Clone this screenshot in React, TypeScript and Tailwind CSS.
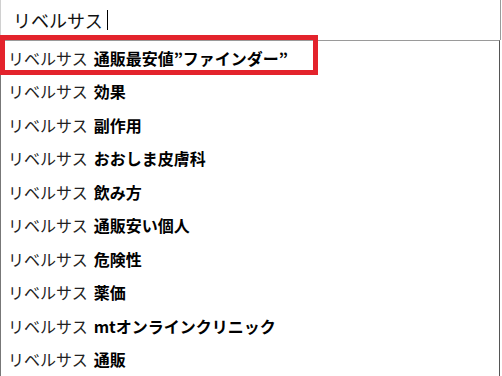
import React from "react";

const items = [
  "通販最安値\u201Dファインダー\u201D",
  "効果",
  "副作用",
  "おおしま皮膚科",
  "飲み方",
  "通販安い個人",
  "危険性",
  "薬価",
  "mtオンラインクリニック",
  "通販",
];

export default function App() {
  return (
    <div
      className="relative w-[502px] h-[376px] overflow-hidden bg-white"
      style={{ fontFamily: '"Noto Sans CJK JP", "Noto Sans", sans-serif' }}
    >
      <div className="h-[40px] w-[501px] border-r border-[#9a9a9a] border-l border-l-[#d0d0d0] flex items-center pl-[12px]">
        <span className="text-[18px] text-[#111] leading-none">リベルサス</span>
        <span className="ml-[4px] w-px h-[20px] bg-black" />
      </div>
      <div className="w-[500px] border-t border-[#9a9a9a] border-l border-l-[#777] border-r border-r-[#555] h-[336px]">
        {items.map((t, i) => (
          <div key={i} className="h-[33.5px] flex items-center pl-[7px] text-[16px] leading-none whitespace-nowrap">
            <span className="text-[#222]">リベルサス</span>
            <span className="ml-[6px] font-bold text-black">{t}</span>
          </div>
        ))}
      </div>
      <div className="absolute left-0 top-[35px] w-[318px] h-[40px] border-[5px] border-[#e3232c]" />
    </div>
  );
}
